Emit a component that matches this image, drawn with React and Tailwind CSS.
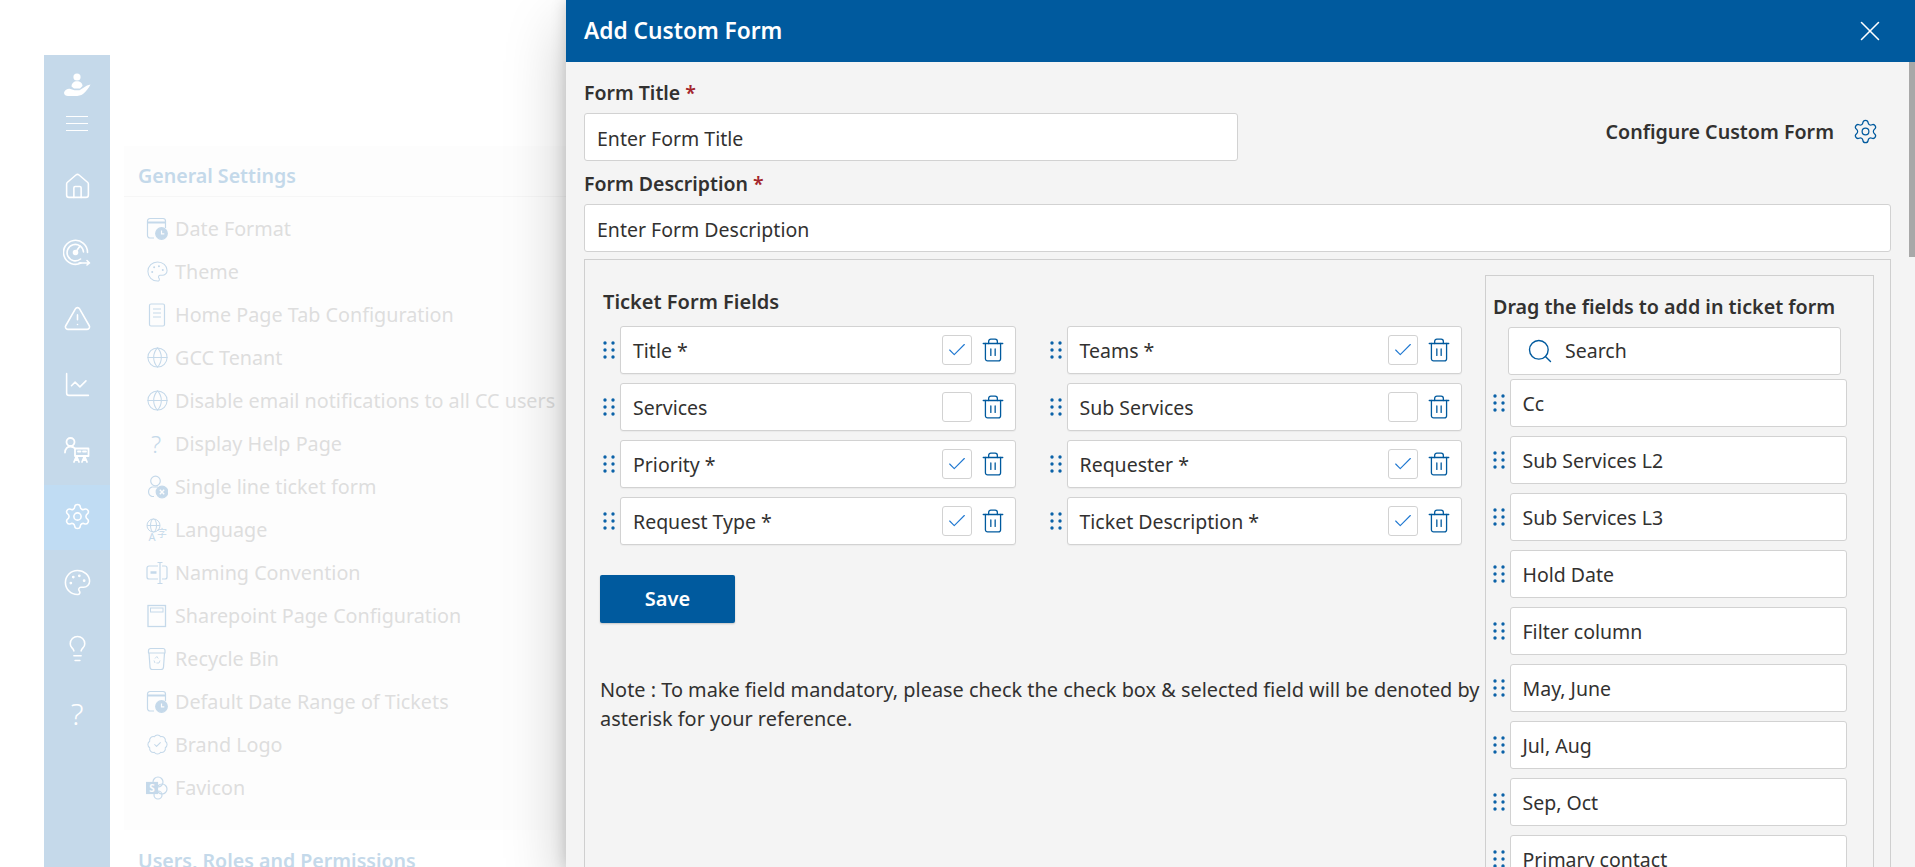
import React from "react";
import { House, TriangleAlert, ChartLine, Settings, Palette, Lightbulb, Globe, BadgeCheck, X, Search, Trash2, Check } from "lucide-react";

const FONT = "font-['Noto_Sans',sans-serif]";

function LogoIcon() {
  return (
    <svg width="27" height="24" viewBox="0 0 27 24" fill="white">
      <circle cx="13" cy="4" r="3.600" />
      <path d="M7.500 13.500c0-3.200 2.400-5.200 5.500-5.200s5.500 2 5.500 4.700l-2.500 2.500h-6z" />
      <path d="M0.500 18.500c1.500-2.500 4-3.200 6-2.500l4 1.200h5l7.500-4.700 3.500-1c-1.500 3.200-4.500 7.200-7.500 9.500-2 1.500-5 2-8 2h-7c-2.500 0-5-2-3.500-4.500z" />
    </svg>
  );
}

function MenuLines() {
  return (
    <svg width="22" height="17" viewBox="0 0 22 17" stroke="white" strokeWidth="1.200">
      <path d="M0 1.500h22M0 8.500h22M0 15.500h22" />
    </svg>
  );
}

function GaugeIcon() {
  return (
    <svg width="28" height="28" viewBox="0 0 28 28" fill="none" stroke="white" strokeWidth="1.600" strokeLinecap="round" strokeLinejoin="round">
      <path d="M18 25A12 12 0 1 1 24.500 14.500" />
      <path d="M17.500 21A8.200 8.200 0 1 1 20.500 14" />
      <circle cx="12.500" cy="14.500" r="2" fill="white" />
      <path d="M13.500 13l3.500-5" />
      <path d="M16 25h10.500M24 22.500l2.500 2.500-2.500 2" />
    </svg>
  );
}

function PersonTrainIcon() {
  return (
    <svg width="26" height="26" viewBox="0 0 26 26" fill="none" stroke="white" strokeWidth="1.800" strokeLinecap="round" strokeLinejoin="round">
      <circle cx="6.500" cy="5" r="4" />
      <path d="M1 15.500c0-3.500 2.500-6 5.500-6 2 0 3.300.7 4.500 2" />
      <path d="M11 11.500h13.500v7.500H11zM14 14.500h2.500M19 14.500h3" />
      <path d="M10 25l2.500-6 2.500 6M11 23h3M18 25l2.500-6 2.500 6M19 23h3" />
    </svg>
  );
}

function DateIcon({ className }) {
  return (
    <svg className={className} width="22" height="24" viewBox="0 0 22 24" fill="none" stroke="currentColor" strokeWidth="1.200">
      <path d="M8 21H4a2.500 2.500 0 0 1-2.500-2.500V4A2.500 2.500 0 0 1 4 1.500h13A2.500 2.500 0 0 1 19.500 4v7" />
      <path d="M1.500 5.500h18" strokeWidth="2" />
      <circle cx="15.500" cy="16.500" r="5.800" fill="currentColor" />
      <path d="M15.500 13.500v3.300h2.800" stroke="#fdfdfd" />
    </svg>
  );
}

function DocIcon({ className }) {
  return (
    <svg className={className} width="22" height="24" viewBox="0 0 22 24" fill="none" stroke="currentColor" strokeWidth="1.200">
      <rect x="3.500" y="1" width="15" height="22" rx="1.500" />
      <path d="M7 6h8M7 10h8M7 14h8" />
    </svg>
  );
}

function UserXIcon({ className }) {
  return (
    <svg className={className} width="22" height="24" viewBox="0 0 22 24" fill="none" stroke="currentColor" strokeWidth="1.200">
      <circle cx="9.500" cy="6" r="4.800" />
      <path d="M8 21.500H6A5 5 0 0 1 6 12h6" />
      <circle cx="16" cy="17" r="5.800" fill="currentColor" />
      <path d="M13.800 14.800l4.400 4.400M18.200 14.800l-4.400 4.400" stroke="#fdfdfd" strokeWidth="1.400" />
    </svg>
  );
}

function LangIcon({ className }) {
  return (
    <svg className={className} width="22" height="24" viewBox="0 0 22 24" fill="none" stroke="currentColor" strokeWidth="1">
      <circle cx="7.500" cy="7.500" r="6.500" />
      <ellipse cx="7.500" cy="7.500" rx="3" ry="6.500" />
      <path d="M1 7.500h13" />
      <text x="6" y="22.500" fontSize="11" textAnchor="middle" fill="currentColor" stroke="none" fontFamily="Noto Sans, sans-serif">A</text>
      <text x="16" y="19" fontSize="10" textAnchor="middle" fill="currentColor" stroke="none" fontFamily="Noto Sans CJK SC, sans-serif">字</text>
    </svg>
  );
}

function NamingIcon({ className }) {
  return (
    <svg className={className} width="22" height="24" viewBox="0 0 22 24" fill="none" stroke="currentColor" strokeWidth="1.200">
      <path d="M12 5H3a2 2 0 0 0-2 2v9a2 2 0 0 0 2 2h9M16 5h3a2 2 0 0 1 2 2v9a2 2 0 0 1-2 2h-3" />
      <path d="M14 1.500v21M11.500 1.500h5M11.500 22.500h5" />
      <path d="M4.500 11.500h6" strokeWidth="2.500" />
    </svg>
  );
}

function PageIcon({ className }) {
  return (
    <svg className={className} width="22" height="24" viewBox="0 0 22 24" fill="none" stroke="currentColor" strokeWidth="1.300">
      <rect x="2" y="1.500" width="17.500" height="21" />
      <rect x="4.500" y="4" width="12.500" height="4" strokeWidth="1" />
    </svg>
  );
}

function BinIcon({ className }) {
  return (
    <svg className={className} width="22" height="24" viewBox="0 0 22 24" fill="none" stroke="currentColor" strokeWidth="1.200" strokeLinejoin="round">
      <path d="M3 6 4 20a2.500 2.500 0 0 0 2.500 2.500h8.500a2.500 2.500 0 0 0 2.500-2.500l1-14" />
      <path d="M2.500 6V3.500a2 2 0 0 1 2-2h12.500a2 2 0 0 1 2 2V6z" />
      <path d="M9 11.500l1.800-2 1.500 2M14 13.500l-1 2.500h-2.500M8 13.500l1 2.500" strokeWidth="0.900" />
    </svg>
  );
}

function SharePointIcon({ className }) {
  return (
    <svg className={className} width="22" height="24" viewBox="0 0 22 24" fill="none" stroke="currentColor" strokeWidth="1.200">
      <circle cx="12" cy="6" r="5" />
      <circle cx="16" cy="13" r="5" />
      <circle cx="12" cy="19" r="4" />
      <rect x="0.500" y="6.500" width="11" height="11" fill="currentColor" />
      <text x="6" y="15.500" fontSize="10" textAnchor="middle" fill="#fdfdfd" stroke="none" fontWeight="700" fontFamily="Noto Sans, sans-serif">S</text>
    </svg>
  );
}

function Grip({ className = "" }) {
  return (
    <svg className={className} width="12" height="18" viewBox="0 0 12 18" fill="#0b62a8">
      <circle cx="2" cy="2" r="1.700" />
      <circle cx="10" cy="2" r="1.700" />
      <circle cx="2" cy="9" r="1.700" />
      <circle cx="10" cy="9" r="1.700" />
      <circle cx="2" cy="16" r="1.700" />
      <circle cx="10" cy="16" r="1.700" />
    </svg>
  );
}

const settings = [
  [DateIcon, "Date Format"],
  [Palette, "Theme"],
  [DocIcon, "Home Page Tab Configuration"],
  [Globe, "GCC Tenant"],
  [Globe, "Disable email notifications to all CC users"],
  ["?", "Display Help Page"],
  [UserXIcon, "Single line ticket form"],
  [LangIcon, "Language"],
  [NamingIcon, "Naming Convention"],
  [PageIcon, "Sharepoint Page Configuration"],
  [BinIcon, "Recycle Bin"],
  [DateIcon, "Default Date Range of Tickets"],
  [BadgeCheck, "Brand Logo"],
  [SharePointIcon, "Favicon"],
];

const customIcons = [DateIcon, DocIcon, UserXIcon, LangIcon, NamingIcon, PageIcon, BinIcon, SharePointIcon];

const navItems = [House, GaugeIcon, TriangleAlert, ChartLine, PersonTrainIcon, Settings, Palette, Lightbulb, "?"];

const left = [
  ["Title *", true],
  ["Teams *", true],
  ["Services", false],
  ["Sub Services", false],
  ["Priority *", true],
  ["Requester *", true],
  ["Request Type *", true],
  ["Ticket Description *", true],
];

const fields = ["Cc", "Sub Services L2", "Sub Services L3", "Hold Date", "Filter column", "May, June", "Jul, Aug", "Sep, Oct", "Primary contact"];

function Sidebar() {
  return (
    <aside className="mt-[55px] ml-[44px] w-[66px] h-[812px] shrink-0 bg-[#c5d9ea] flex flex-col items-stretch">
      <div className="h-[98px] flex flex-col items-center pt-[18px]">
        <LogoIcon />
        <div className="mt-[18px]"><MenuLines /></div>
      </div>
      {navItems.map((Icon, i) => {
        const active = i === 5;
        return (
          <div key={i} className={active ? "mt-[2px] h-[65px] pb-[3px] flex items-center justify-center bg-[#c0dcf3] text-white" : i === 6 ? "h-[65px] flex items-center justify-center text-white" : "h-[66px] flex items-center justify-center text-white"}>
            {Icon === "?" ? (
              <span className="text-[30px] leading-none font-light">?</span>
            ) : Icon === GaugeIcon || Icon === PersonTrainIcon ? (
              <Icon />
            ) : (
              <Icon size={29} strokeWidth={1.300} />
            )}
          </div>
        );
      })}
    </aside>
  );
}

function SettingsCard() {
  return (
    <main className="flex-1 ml-[14px] mt-[146px]">
      <div className="bg-[#fdfdfd] h-[684px]">
        <h2 className="h-[51px] pl-[14px] pt-[10px] flex items-center text-[19.600px] font-semibold text-[#c4d9ea] border-b border-[#f6f6f6]">General Settings</h2>
        <ul className="pt-[10px]">
          {settings.map(([Icon, label], i) => (
            <li key={i} className="h-[43px] pl-[22px] flex items-center text-[19.750px] text-[#dedede]">
              <span className="w-[29px] flex items-center text-[#c5d9ea]">
                {Icon === "?" ? (
                  <span className="pl-[5px] text-[24px] leading-none font-light">?</span>
                ) : customIcons.includes(Icon) ? (
                  <Icon />
                ) : (
                  <Icon size={23} strokeWidth={1.100} />
                )}
              </span>
              <span className="whitespace-nowrap">{label}</span>
            </li>
          ))}
        </ul>
      </div>
      <h2 className="mt-[16px] pl-[14px] text-[19.600px] font-semibold text-[#c4d9ea] whitespace-nowrap">Users, Roles and Permissions</h2>
    </main>
  );
}

function FieldRow({ label, checked }) {
  return (
    <div className="flex items-center gap-[5px]">
      <Grip />
      <div className="w-[395.500px] h-[48px] bg-white border border-[#d2d2d2] rounded-[3px] pl-[12px] pr-[9px] flex items-center shadow-[0_1px_1px_rgba(0,0,0,0.04)]">
        <span className="flex-1 pt-[2px] text-[19.500px] text-[#323130]">{label}</span>
        <span className="w-[30px] h-[30px] border border-[#d2d2d2] rounded-[3px] flex items-center justify-center bg-white">
          {checked && <Check size={22} strokeWidth={1.200} className="text-[#1f78d1]" />}
        </span>
        <Trash2 size={26} strokeWidth={1.200} className="ml-[8px] text-[#005a9e]" />
      </div>
    </div>
  );
}

function TicketFields() {
  return (
    <div className="w-[900px] shrink-0 pl-[18px] pt-[27px]">
      <h3 className="h-[29px] text-[20px] leading-[29px] font-semibold text-[#323130]">Ticket Form Fields</h3>
      <div className="mt-[10px] grid grid-cols-[412.500px_412.500px] gap-x-[34px] gap-y-[9px]">
        {left.map(([l, c]) => (
          <FieldRow key={l} label={l} checked={c} />
        ))}
      </div>
      <button className="mt-[30px] -ml-[3px] block w-[135px] h-[48px] rounded-[2px] bg-[#005a9e] text-white text-[20px] font-semibold shadow-[0_1px_2px_rgba(0,0,0,0.2)]">Save</button>
      <p className="mt-[52px] -ml-[3px] w-[890px] text-[19.900px] leading-[29px] text-[#323130]">
        Note : To make field mandatory, please check the check box &amp; selected field will be denoted by asterisk for your reference.
      </p>
    </div>
  );
}

function DragFields() {
  return (
    <div className="w-[389px] h-[800px] shrink-0 mt-[15px] border border-[#cfcfcf] pl-[7px] pt-[16px]">
      <h3 className="h-[29px] text-[19.700px] leading-[29px] font-semibold text-[#323130] whitespace-nowrap">Drag the fields to add in ticket form</h3>
      <div className="ml-[15px] mt-[6px] w-[333px] h-[47.500px] bg-white border border-[#d2d2d2] rounded-[3px] flex items-center pl-[17px] gap-[11px]">
        <Search size={28} strokeWidth={1.200} className="text-[#005a9e]" />
        <span className="text-[19.500px] text-[#323130]">Search</span>
      </div>
      <div className="mt-[4px] flex flex-col gap-[9px]">
        {fields.map((f) => (
          <div key={f} className="flex items-center gap-[5px]">
            <Grip />
            <div className="w-[337px] h-[48px] bg-white border border-[#d2d2d2] rounded-[3px] pl-[11.500px] pt-[3px] flex items-center text-[19.500px] text-[#323130]">{f}</div>
          </div>
        ))}
      </div>
    </div>
  );
}

function Panel() {
  return (
    <section className="absolute top-0 right-0 bottom-0 w-[1349px] bg-[#f4f4f4] overflow-hidden shadow-[0_0_14.400px_rgba(0,0,0,0.18),0_25.600px_57.600px_rgba(0,0,0,0.22)]">
      <header className="h-[62px] bg-[#005a9e] pl-[18px] pr-[28px] flex items-center justify-between text-white">
        <h1 className="text-[22.700px] font-semibold">Add Custom Form</h1>
        <X size={34} strokeWidth={1.100} />
      </header>
      <div className="absolute right-0 top-[62px] w-[6px] h-[195px] bg-[#a8a8a8]" />
      <div className="pl-[18px] pr-[24px]">
        <div className="flex items-center justify-between">
          <div className="w-[654px]">
            <label className="mt-[16px] block h-[29px] leading-[29px] text-[19.500px] font-semibold text-[#323130]">Form Title <span className="text-[#a4262c]">*</span></label>
            <div className="mt-[6px] h-[48px] bg-white border border-[#d2d2d2] rounded-[3px] pl-[12px] pt-[3px] flex items-center text-[19.500px] text-[#323130]">Enter Form Title</div>
          </div>
          <div className="flex items-center gap-[18px] pr-[12px] pt-[40px]">
            <span className="text-[19.650px] font-semibold text-[#323130]">Configure Custom Form</span>
            <Settings size={27} strokeWidth={1.100} className="text-[#005a9e]" />
          </div>
        </div>
        <label className="mt-[8px] block h-[29px] leading-[29px] text-[19.500px] font-semibold text-[#323130]">Form Description <span className="text-[#a4262c]">*</span></label>
        <div className="mt-[6px] h-[48px] bg-white border border-[#d2d2d2] rounded-[3px] pl-[12px] pt-[3px] flex items-center text-[19.500px] text-[#323130]">Enter Form Description</div>
        <div className="mt-[7px] h-[800px] border border-[#cfcfcf] flex">
          <TicketFields />
          <DragFields />
        </div>
      </div>
    </section>
  );
}

export default function App() {
  return (
    <div className={`relative w-full h-[867px] overflow-hidden bg-white flex ${FONT}`}>
      <Sidebar />
      <SettingsCard />
      <Panel />
    </div>
  );
}
